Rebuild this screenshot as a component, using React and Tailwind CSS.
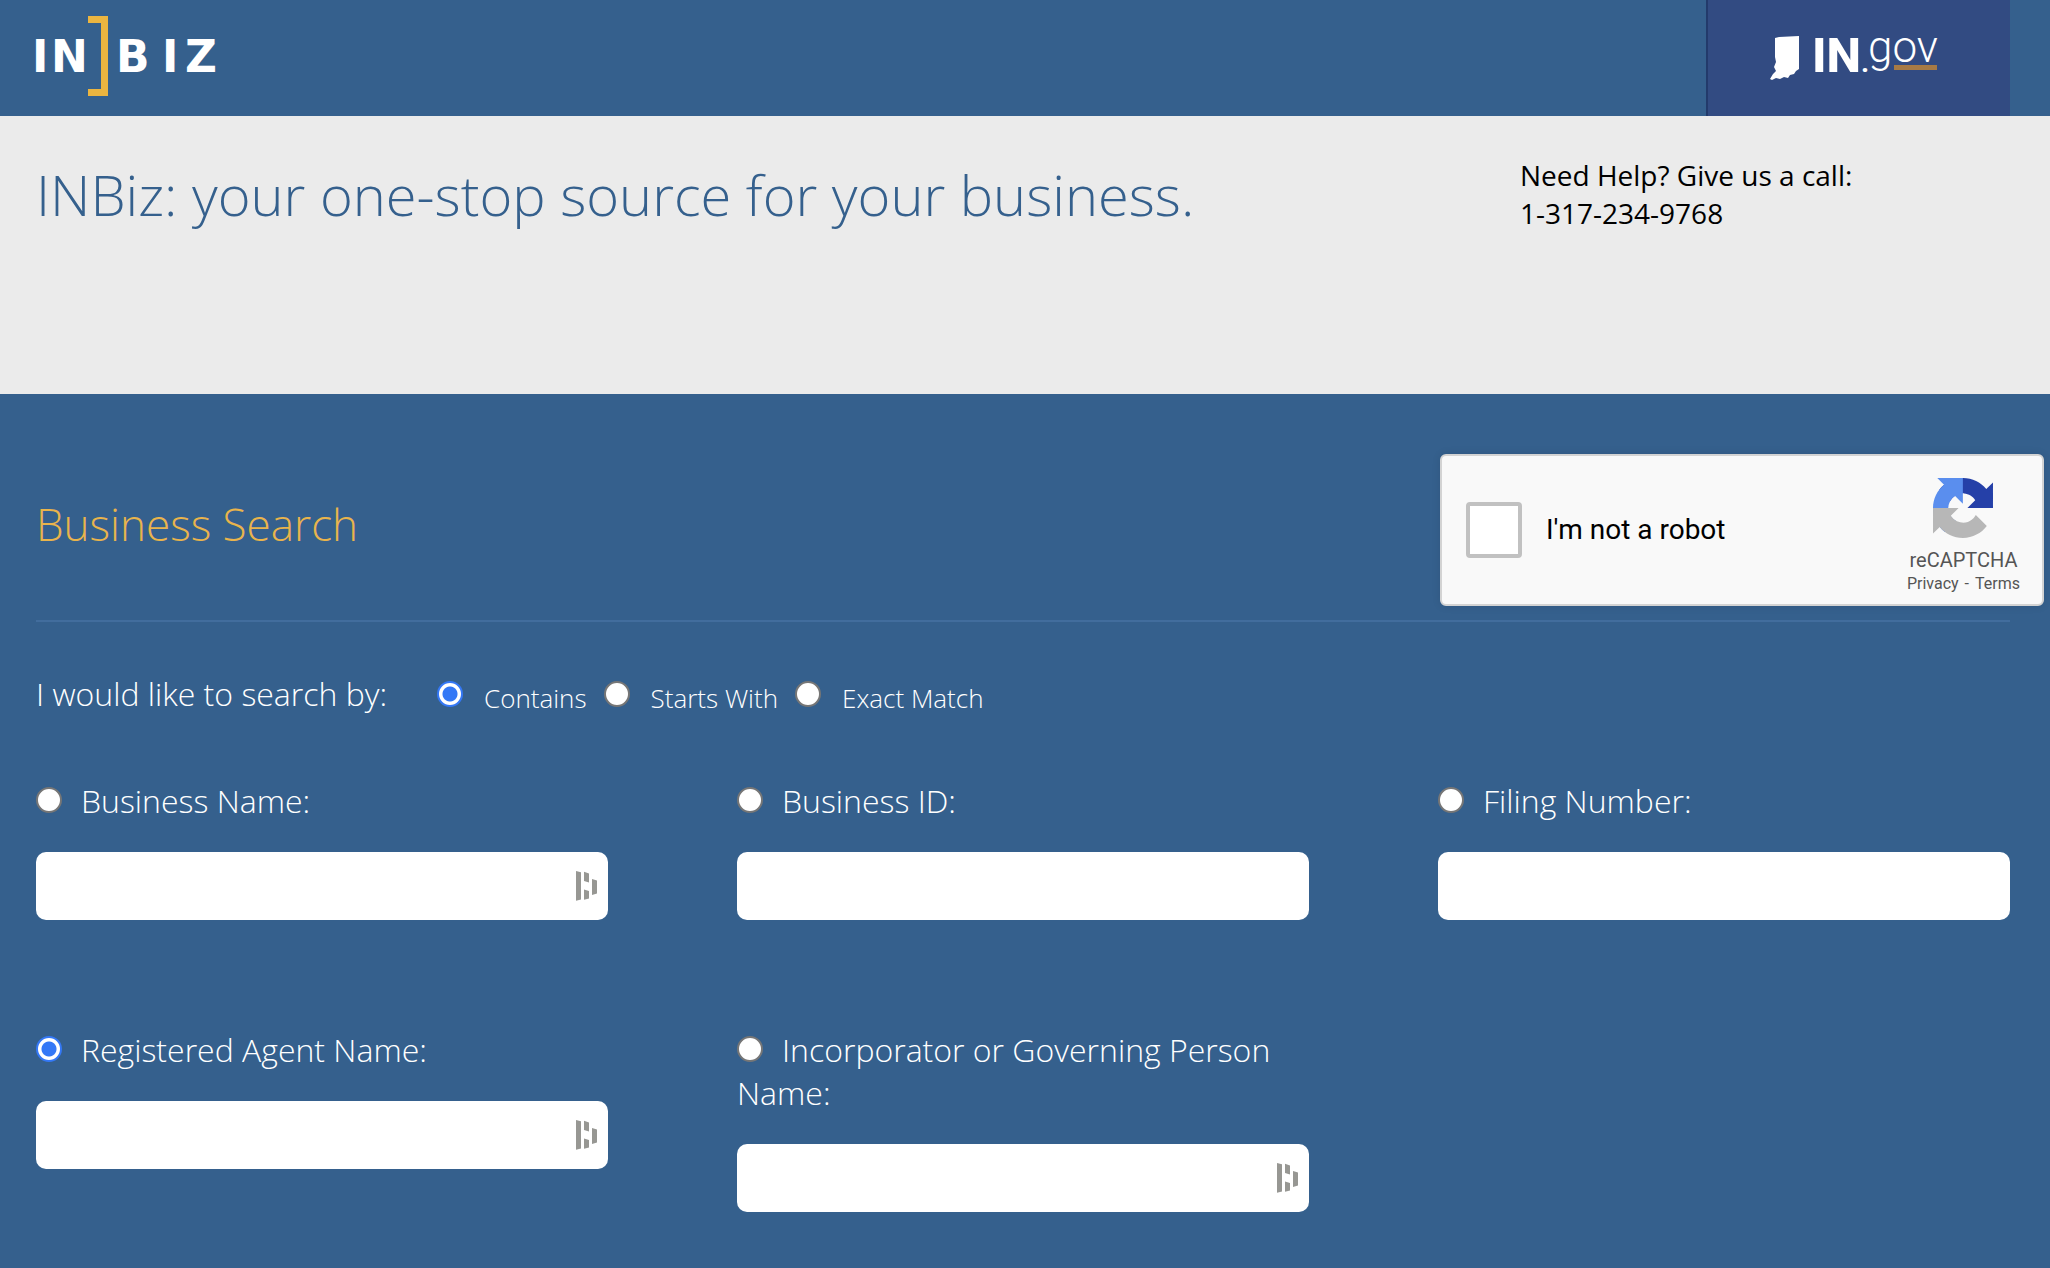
import React from "react";

function InBizLogo() {
  return (
    <svg width="190" height="80" viewBox="-4 0 190 80" role="img" aria-label="INBiz" fontFamily="'DejaVu Sans', sans-serif" fontWeight="700" fontSize="44" fill="#ffffff">
      <text x="-4" y="56">I</text>
      <text x="15" y="56">N</text>
      <path d="M52 0H72V80H52V73H65V7H52Z" fill="#ebb540" />
      <text x="80" y="56">B</text>
      <text x="126" y="56">I</text>
      <text x="149" y="56">Z</text>
    </svg>
  );
}

function InGovLogo() {
  return (
    <svg width="178" height="52" viewBox="0 0 178 52" role="img" aria-label="IN.gov" fill="#ffffff">
      <path d="M5 3L9 2L29 1V34L26 36L24 39L20 40L18 43L14 42L10 44L6 43L2 45L0 44L3 39L6 36L4 32L6 27L5 22Z" />
      <text x="42" y="37" fontFamily="Roboto, sans-serif" fontWeight="800" fontSize="49">IN</text>
      <text x="91" y="37" fontFamily="Roboto, sans-serif" fontWeight="700" fontSize="28">.</text>
      <text x="98" y="27" fontFamily="Roboto, sans-serif" fontWeight="300" fontSize="44">gov</text>
      <rect x="124" y="30" width="43" height="5" fill="#a77a45" />
    </svg>
  );
}

function RecaptchaLogo() {
  return (
    <svg width="60" height="60" viewBox="0 0 64 64" aria-hidden="true">
      <path fill="#2540a8" d="M64 31.955l-.033-1.37V4.687l-7.16 7.16C50.948 4.674 42.033.093 32.05.093c-10.4 0-19.622 4.96-25.458 12.64l11.736 11.86a15.55 15.55 0 0 1 4.754-5.334c2.05-1.6 4.952-2.906 8.968-2.906.485 0 .86.057 1.135.163 4.976.393 9.288 3.14 11.828 7.124l-8.307 8.307L64 31.953" />
      <path fill="#5a8eee" d="M31.862.094l-1.37.033H4.594l7.16 7.16C4.58 13.147 0 22.06 0 32.046c0 10.4 4.96 19.622 12.64 25.458L24.5 45.768a15.55 15.55 0 0 1-5.334-4.754c-1.6-2.05-2.906-4.952-2.906-8.968 0-.485.057-.86.163-1.135.393-4.976 3.14-9.288 7.124-11.828l8.307 8.307L31.86.095" />
      <path fill="#b7b7b7" d="M.001 32.045l.033 1.37v25.898l7.16-7.16c5.86 7.173 14.774 11.754 24.76 11.754 10.4 0 19.622-4.96 25.458-12.64l-11.736-11.86a15.55 15.55 0 0 1-4.754 5.334c-2.05 1.6-4.952 2.906-8.968 2.906-.485 0-.86-.057-1.135-.163-4.976-.393-9.288-3.14-11.828-7.124l8.307-8.307c-10.522.04-22.4.066-27.295-.005" />
    </svg>
  );
}

function FillIcon() {
  return (
    <svg width="21" height="30" viewBox="0 0 21 30" fill="#979793" aria-hidden="true">
      <path d="M0 0L5 1.2V28.6L0 29.8ZM8 0.8L13 2.6V11.4L8 10ZM8 18.4L13 20V27.4L8 28.8ZM16 8L21 9.6V22.4L16 24Z" />
    </svg>
  );
}

function Radio({ id, name, defaultChecked }) {
  return (
    <input
      type="radio"
      id={id}
      name={name}
      defaultChecked={defaultChecked}
      className="size-[26px] shrink-0 appearance-none rounded-full border-2 border-[#767676] bg-white checked:border-[#3478f6] checked:bg-[radial-gradient(circle,#3478f6_0_7px,#ffffff_8px)]"
    />
  );
}

const fields = [
  { id: "business-name", label: "Business Name:", fill: true },
  { id: "business-id", label: "Business ID:" },
  { id: "filing-number", label: "Filing Number:" },
  { id: "agent-name", label: "Registered Agent Name:", fill: true, checked: true },
  { id: "person-name", label: "Incorporator or Governing Person Name:", fill: true },
];

function Field({ id, label, fill, checked }) {
  return (
    <div>
      <div className="text-[32px] leading-[43px]">
        <span className="mr-[19px] inline-block align-top pt-[6px] leading-none">
          <Radio id={id + "-radio"} name="field" defaultChecked={checked} />
        </span>
        <label htmlFor={id + "-radio"}>{label}</label>
      </div>
      <div className="relative mt-[30px]">
        <input type="text" id={id} aria-label={label} className="block h-[68px] w-full rounded-[10px] bg-white px-4 text-[28px] text-black" />
        {fill && (
          <span className="absolute right-[11px] top-[19px]">
            <FillIcon />
          </span>
        )}
      </div>
    </div>
  );
}

const modes = ["Contains", "Starts With", "Exact Match"];

export default function App() {
  return (
    <div className="min-h-screen bg-[#35608d] font-['Open_Sans',sans-serif] font-light text-white">
      <header className="flex h-[116px] items-start justify-between pl-8 pr-10">
        <a href="#home" className="mt-4 block">
          <InBizLogo />
        </a>
        <a href="#in-gov" className="flex h-full w-[304px] justify-center border-l-2 border-[#233a6b] bg-[#324b82] pt-[35px]">
          <InGovLogo />
        </a>
      </header>

      <section className="flex h-[278px] items-start justify-between bg-[#ebebeb] pl-9 pr-10 pt-10">
        <h1 className="text-[56px] leading-[76px] text-[#35608d]">INBiz: your one-stop source for your business.</h1>
        <p className="w-[490px] text-[28px] font-normal leading-[38px] text-black">
          Need Help? Give us a call:
          <br />
          1-317-234-9768
        </p>
      </section>

      <main className="pl-9 pr-10 pt-[60px]">
        <div className="flex h-[168px] items-start justify-between border-b-2 border-[#426d9d]">
          <h2 className="mt-10 text-[44px] leading-[60px] text-[#e9b44c]">Business Search</h2>
          <div className="-mr-[34px] flex h-[152px] w-[604px] items-center justify-between rounded-md border-2 border-[#d3d3d3] bg-[#f9f9f9] pl-6 pr-[22px] font-[Roboto,sans-serif] font-normal shadow-[0_0_8px_rgba(0,0,0,0.1)]">
            <div className="flex items-center gap-6">
              <input type="checkbox" id="robot" className="size-14 appearance-none rounded-[4px] border-4 border-[#c1c1c1] bg-white" />
              <label htmlFor="robot" className="text-[28px] leading-[34px] text-black">I'm not a robot</label>
            </div>
            <div className="flex flex-col items-center pt-3 text-[#555555]">
              <RecaptchaLogo />
              <div className="mt-2 text-[20px] leading-[28px]">reCAPTCHA</div>
              <div className="flex gap-[6px] text-[16px] leading-[20px]">
                <a href="#privacy">Privacy</a>
                <span>-</span>
                <a href="#terms">Terms</a>
              </div>
            </div>
          </div>
        </div>

        <fieldset className="mt-[50px] flex items-center">
          <legend className="float-left mr-[50px] text-[32px] leading-[42px]">I would like to search by:</legend>
          <div className="flex items-center gap-[17px]">
            {modes.map((m, i) => (
              <div key={m} className="flex items-center gap-[21px]">
                <Radio id={"mode-" + i} name="mode" defaultChecked={i === 0} />
                <label htmlFor={"mode-" + i} className="pt-2 text-[26px] leading-[36px]">{m}</label>
              </div>
            ))}
          </div>
        </fieldset>

        <div className="mt-[63px] grid grid-cols-3 gap-x-[129px] gap-y-[108px] pb-14">
          {fields.map((f) => (
            <Field key={f.id} {...f} />
          ))}
        </div>
      </main>
    </div>
  );
}
